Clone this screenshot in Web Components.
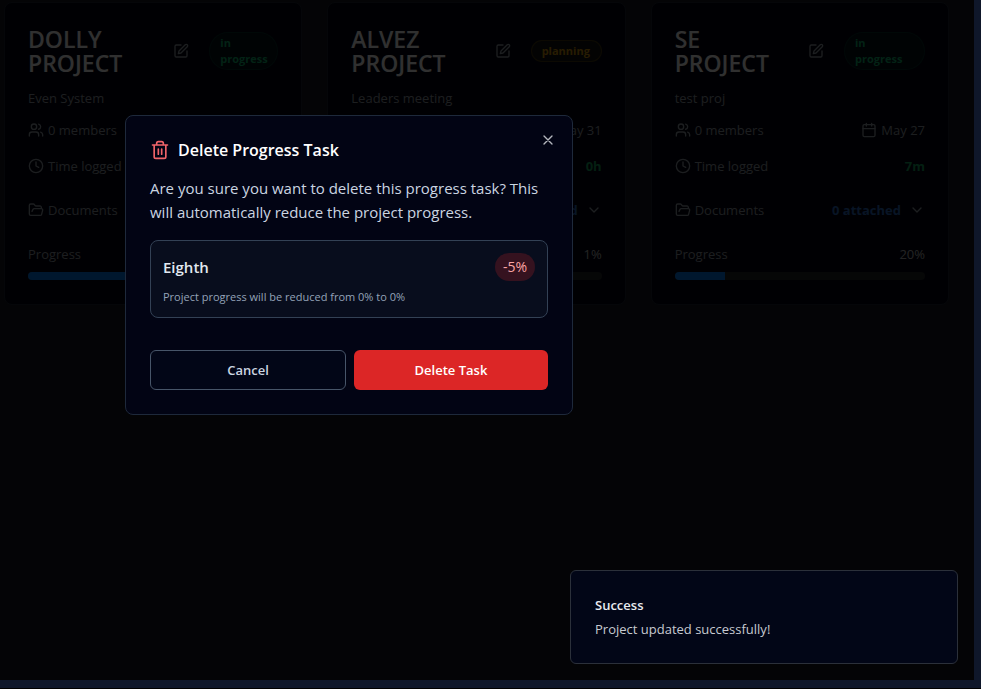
<!DOCTYPE html>
<html lang="en">
<head>
<meta charset="utf-8">
<meta name="viewport" content="width=device-width, initial-scale=1">
<title>Projects</title>
<style>
  html, body { margin: 0; height: 100%; background: #000; }
  body { font-family: "Open Sans", "Noto Sans", sans-serif; font-size: 13px; line-height: 20px; color: #f8fafc; overflow: hidden; }
</style>
</head>
<body>
<app-shell>
  <project-card name="DOLLY PROJECT" about="Even System" status="in progress" progress="60"></project-card>
  <project-card name="ALVEZ PROJECT" about="Leaders meeting" status="planning" due="May 31" logged="0h" documents="0 attached" progress="1" show-percent></project-card>
  <project-card name="SE PROJECT" about="test proj" status="in progress" due="May 27" logged="7m" documents="0 attached" progress="20" show-percent wide-status></project-card>
  <confirm-dialog slot="overlay" heading="Delete Progress Task">
    Are you sure you want to delete this progress task? This will automatically reduce the project progress.
    <task-summary slot="summary" name="Eighth" change="-5%">Project progress will be reduced from 0% to 0%</task-summary>
  </confirm-dialog>
  <toast-message slot="overlay" heading="Success">Project updated successfully!</toast-message>
</app-shell>
<script>
const ICONS = {
  edit: '<path d="M12 3H5a2 2 0 0 0-2 2v14a2 2 0 0 0 2 2h14a2 2 0 0 0 2-2v-7"/><path d="M18.375 2.625a2.121 2.121 0 1 1 3 3L12 15l-4 1 1-4Z"/>',
  users: '<path d="M16 21v-2a4 4 0 0 0-4-4H6a4 4 0 0 0-4 4v2"/><circle cx="9" cy="7" r="4"/><path d="M22 21v-2a4 4 0 0 0-3-3.87"/><path d="M16 3.13a4 4 0 0 1 0 7.75"/>',
  calendar: '<path d="M8 2v4M16 2v4"/><rect width="18" height="18" x="3" y="4" rx="2"/><path d="M3 10h18"/>',
  clock: '<circle cx="12" cy="12" r="10"/><path d="M12 6v6l4 2"/>',
  folder: '<path d="m6 14 1.5-2.9A2 2 0 0 1 9.24 10H20a2 2 0 0 1 1.94 2.5l-1.54 6a2 2 0 0 1-1.95 1.5H4a2 2 0 0 1-2-2V5a2 2 0 0 1 2-2h3.9a2 2 0 0 1 1.69.9l.81 1.2a2 2 0 0 0 1.67.9H18a2 2 0 0 1 2 2v2"/>',
  chevron: '<path d="m6 9 6 6 6-6"/>',
  trash: '<path d="M3 6h18M19 6v14c0 1-1 2-2 2H7c-1 0-2-1-2-2V6M8 6V4c0-1 1-2 2-2h4c1 0 2 1 2 2v2M10 11v6M14 11v6"/>',
  close: '<path d="M18 6 6 18M6 6l12 12"/>'
};

class UiIcon extends HTMLElement {
  connectedCallback() {
    this.attachShadow({ mode: 'open' }).innerHTML = `
      <style>
        :host { display: block; flex: none; width: var(--icon-size, 16px); height: var(--icon-size, 16px); }
        svg { display: block; width: 100%; height: 100%; }
      </style>
      <svg viewBox="0 0 24 24" fill="none" stroke="currentColor" stroke-width="2" stroke-linecap="round" stroke-linejoin="round" aria-hidden="true">${ICONS[this.getAttribute('name')]}</svg>`;
  }
}
customElements.define('ui-icon', UiIcon);

class AppShell extends HTMLElement {
  connectedCallback() {
    this.attachShadow({ mode: 'open' }).innerHTML = `
      <style>
        :host { display: flex; box-sizing: border-box; height: 100vh; padding: 0 7px 8px 0; border-bottom: 1px solid #000; background: #0f172a; }
        .view { flex: 1; position: relative; background: #14181f; }
        main { display: grid; grid-template-columns: repeat(3, minmax(0, 1fr)); gap: 25px; padding: 2px 25px 24px 4px; }
        .shade { position: absolute; inset: 0; background: rgba(0, 0, 0, .8); }
      </style>
      <div class="view"><main><slot></slot></main><div class="shade"></div></div>
      <slot name="overlay"></slot>`;
  }
}
customElements.define('app-shell', AppShell);

class StatusBadge extends HTMLElement {
  connectedCallback() {
    this.attachShadow({ mode: 'open' }).innerHTML = `
      <style>
        :host { display: block; box-sizing: border-box; flex: none; width: 69px; padding: 2px 10px; border: 1px solid rgba(16, 185, 129, .14); border-radius: 20px; background: rgba(16, 185, 129, .07); color: #0fa868; font-size: 11px; line-height: 16px; font-weight: 700; }
        :host([wide]) { width: 81px; }
        :host([kind="planning"]) { width: 71px; border-color: rgba(234, 179, 8, .2); background: rgba(234, 179, 8, .08); color: #c28a0b; }
      </style><slot></slot>`;
  }
}
customElements.define('status-badge', StatusBadge);

class ProgressBar extends HTMLElement {
  connectedCallback() {
    this.attachShadow({ mode: 'open' }).innerHTML = `
      <style>
        :host { display: block; height: 8px; border-radius: 4px; overflow: hidden; background: #202327; }
        div { height: 100%; background: #0074e4; }
      </style><div style="width:${this.getAttribute('value')}%"></div>`;
  }
}
customElements.define('progress-bar', ProgressBar);

class ProjectCard extends HTMLElement {
  connectedCallback() {
    const a = n => this.getAttribute(n) || '';
    const status = a('status');
    this.attachShadow({ mode: 'open' }).innerHTML = `
      <style>
        :host { display: flex; flex-direction: column; gap: 16px; box-sizing: border-box; padding: 24px 23px; border: 1px solid #1c2130; border-radius: 8px; background: #020410; color: #8e949e; }
        header { display: flex; align-items: center; gap: 10px; padding-bottom: 1px; }
        h2 { flex: 1; margin: 0; font-size: 23px; line-height: 24px; font-weight: 600; color: #f0f0f0; }
        button { display: flex; align-items: center; justify-content: center; padding: 0; border: 0; background: none; color: inherit; font: inherit; }
        .edit { width: 36px; height: 36px; }
        .intro { display: grid; gap: 12px; }
        p { margin: 0; }
        .row, .row span { display: flex; align-items: center; }
        .row { justify-content: space-between; }
        .row span { gap: 4px; }
        .row .logged { color: #149a5a; font-weight: 700; }
        .docs { height: 36px; gap: 8px; }
        .docs b { color: #2a66b8; font-weight: 700; }
        .meter { display: grid; gap: 8px; }
        .percent { color: #b0b0b0; }
      </style>
      <div class="intro">
        <header>
          <h2>${a('name')}</h2>
          <button class="edit" aria-label="Edit project"><ui-icon name="edit"></ui-icon></button>
          <status-badge kind="${status}" ${this.hasAttribute('wide-status') ? 'wide' : ''}>${status}</status-badge>
        </header>
        <p>${a('about')}</p>
        <div class="row"><span><ui-icon name="users"></ui-icon>0 members</span>${a('due') && `<span><ui-icon name="calendar"></ui-icon>${a('due')}</span>`}</div>
      </div>
      <div class="row"><span><ui-icon name="clock"></ui-icon>Time logged</span><span class="logged">${a('logged')}</span></div>
      <div class="row docs"><span><ui-icon name="folder"></ui-icon>Documents</span>${a('documents') && `<button class="docs"><b>${a('documents')}</b><ui-icon name="chevron"></ui-icon></button>`}</div>
      <div class="meter">
        <div class="row"><span>Progress</span><span class="percent">${this.hasAttribute('show-percent') ? a('progress') + '%' : ''}</span></div>
        <progress-bar value="${a('progress')}"></progress-bar>
      </div>`;
  }
}
customElements.define('project-card', ProjectCard);

class TaskSummary extends HTMLElement {
  connectedCallback() {
    this.attachShadow({ mode: 'open' }).innerHTML = `
      <style>
        :host { display: grid; gap: 8px; padding: 12px; border: 1px solid #334155; border-radius: 8px; background: #080d1d; }
        div { display: flex; align-items: center; justify-content: space-between; }
        h3 { margin: 0; font-size: 15px; font-weight: 600; color: #e2e8f0; }
        span { padding: 4px 8px; border-radius: 14px; background: #35121f; color: #fca5a5; font-size: 14px; }
        p { margin: 0; font-size: 11px; line-height: 16px; color: #94a3b8; }
      </style>
      <div><h3>${this.getAttribute('name')}</h3><span>${this.getAttribute('change')}</span></div>
      <p><slot></slot></p>`;
  }
}
customElements.define('task-summary', TaskSummary);

class ConfirmDialog extends HTMLElement {
  connectedCallback() {
    this.attachShadow({ mode: 'open' }).innerHTML = `
      <style>
        :host { display: block; position: absolute; left: 125px; top: 115px; box-sizing: border-box; width: 448px; max-width: calc(100% - 125px); padding: 24px; border: 1px solid #1e293b; border-radius: 8px; background: #020414; }
        section { display: grid; gap: 16px; }
        header { display: flex; align-items: center; gap: 8px; color: #f16469; --icon-size: 20px; }
        h2 { margin: 0; font-size: 16px; line-height: 20px; font-weight: 600; color: #fff; }
        p { margin: 0; font-size: 15px; line-height: 24px; color: #cbd5e1; }
        footer { display: flex; gap: 8px; padding-top: 16px; }
        button { font: inherit; font-weight: 600; padding: 0; }
        footer button { flex: 1 1 0; height: 40px; border: 1px solid #475569; border-radius: 6px; background: #020617; color: #cbd5e1; }
        footer .danger { border: 0; background: #dc2626; color: #fff; }
        .close { position: absolute; right: 16px; top: 16px; border: 0; background: none; color: #b4b7be; }
      </style>
      <section role="dialog" aria-labelledby="heading">
        <header><ui-icon name="trash"></ui-icon><h2 id="heading">${this.getAttribute('heading')}</h2></header>
        <p><slot></slot></p>
        <slot name="summary"></slot>
        <footer><button>Cancel</button><button class="danger">Delete Task</button></footer>
      </section>
      <button class="close" aria-label="Close"><ui-icon name="close"></ui-icon></button>`;
  }
}
customElements.define('confirm-dialog', ConfirmDialog);

class ToastMessage extends HTMLElement {
  connectedCallback() {
    this.attachShadow({ mode: 'open' }).innerHTML = `
      <style>
        :host { display: grid; gap: 4px; position: absolute; right: 23px; bottom: 25px; box-sizing: border-box; width: 388px; padding: 24px; border: 1px solid #2b303a; border-radius: 6px; background: #020617; color: #c7cad1; }
        strong { font-weight: 600; color: #e8ebf0; }
      </style>
      <strong>${this.getAttribute('heading')}</strong><div role="status"><slot></slot></div>`;
  }
}
customElements.define('toast-message', ToastMessage);
</script>
</body>
</html>
